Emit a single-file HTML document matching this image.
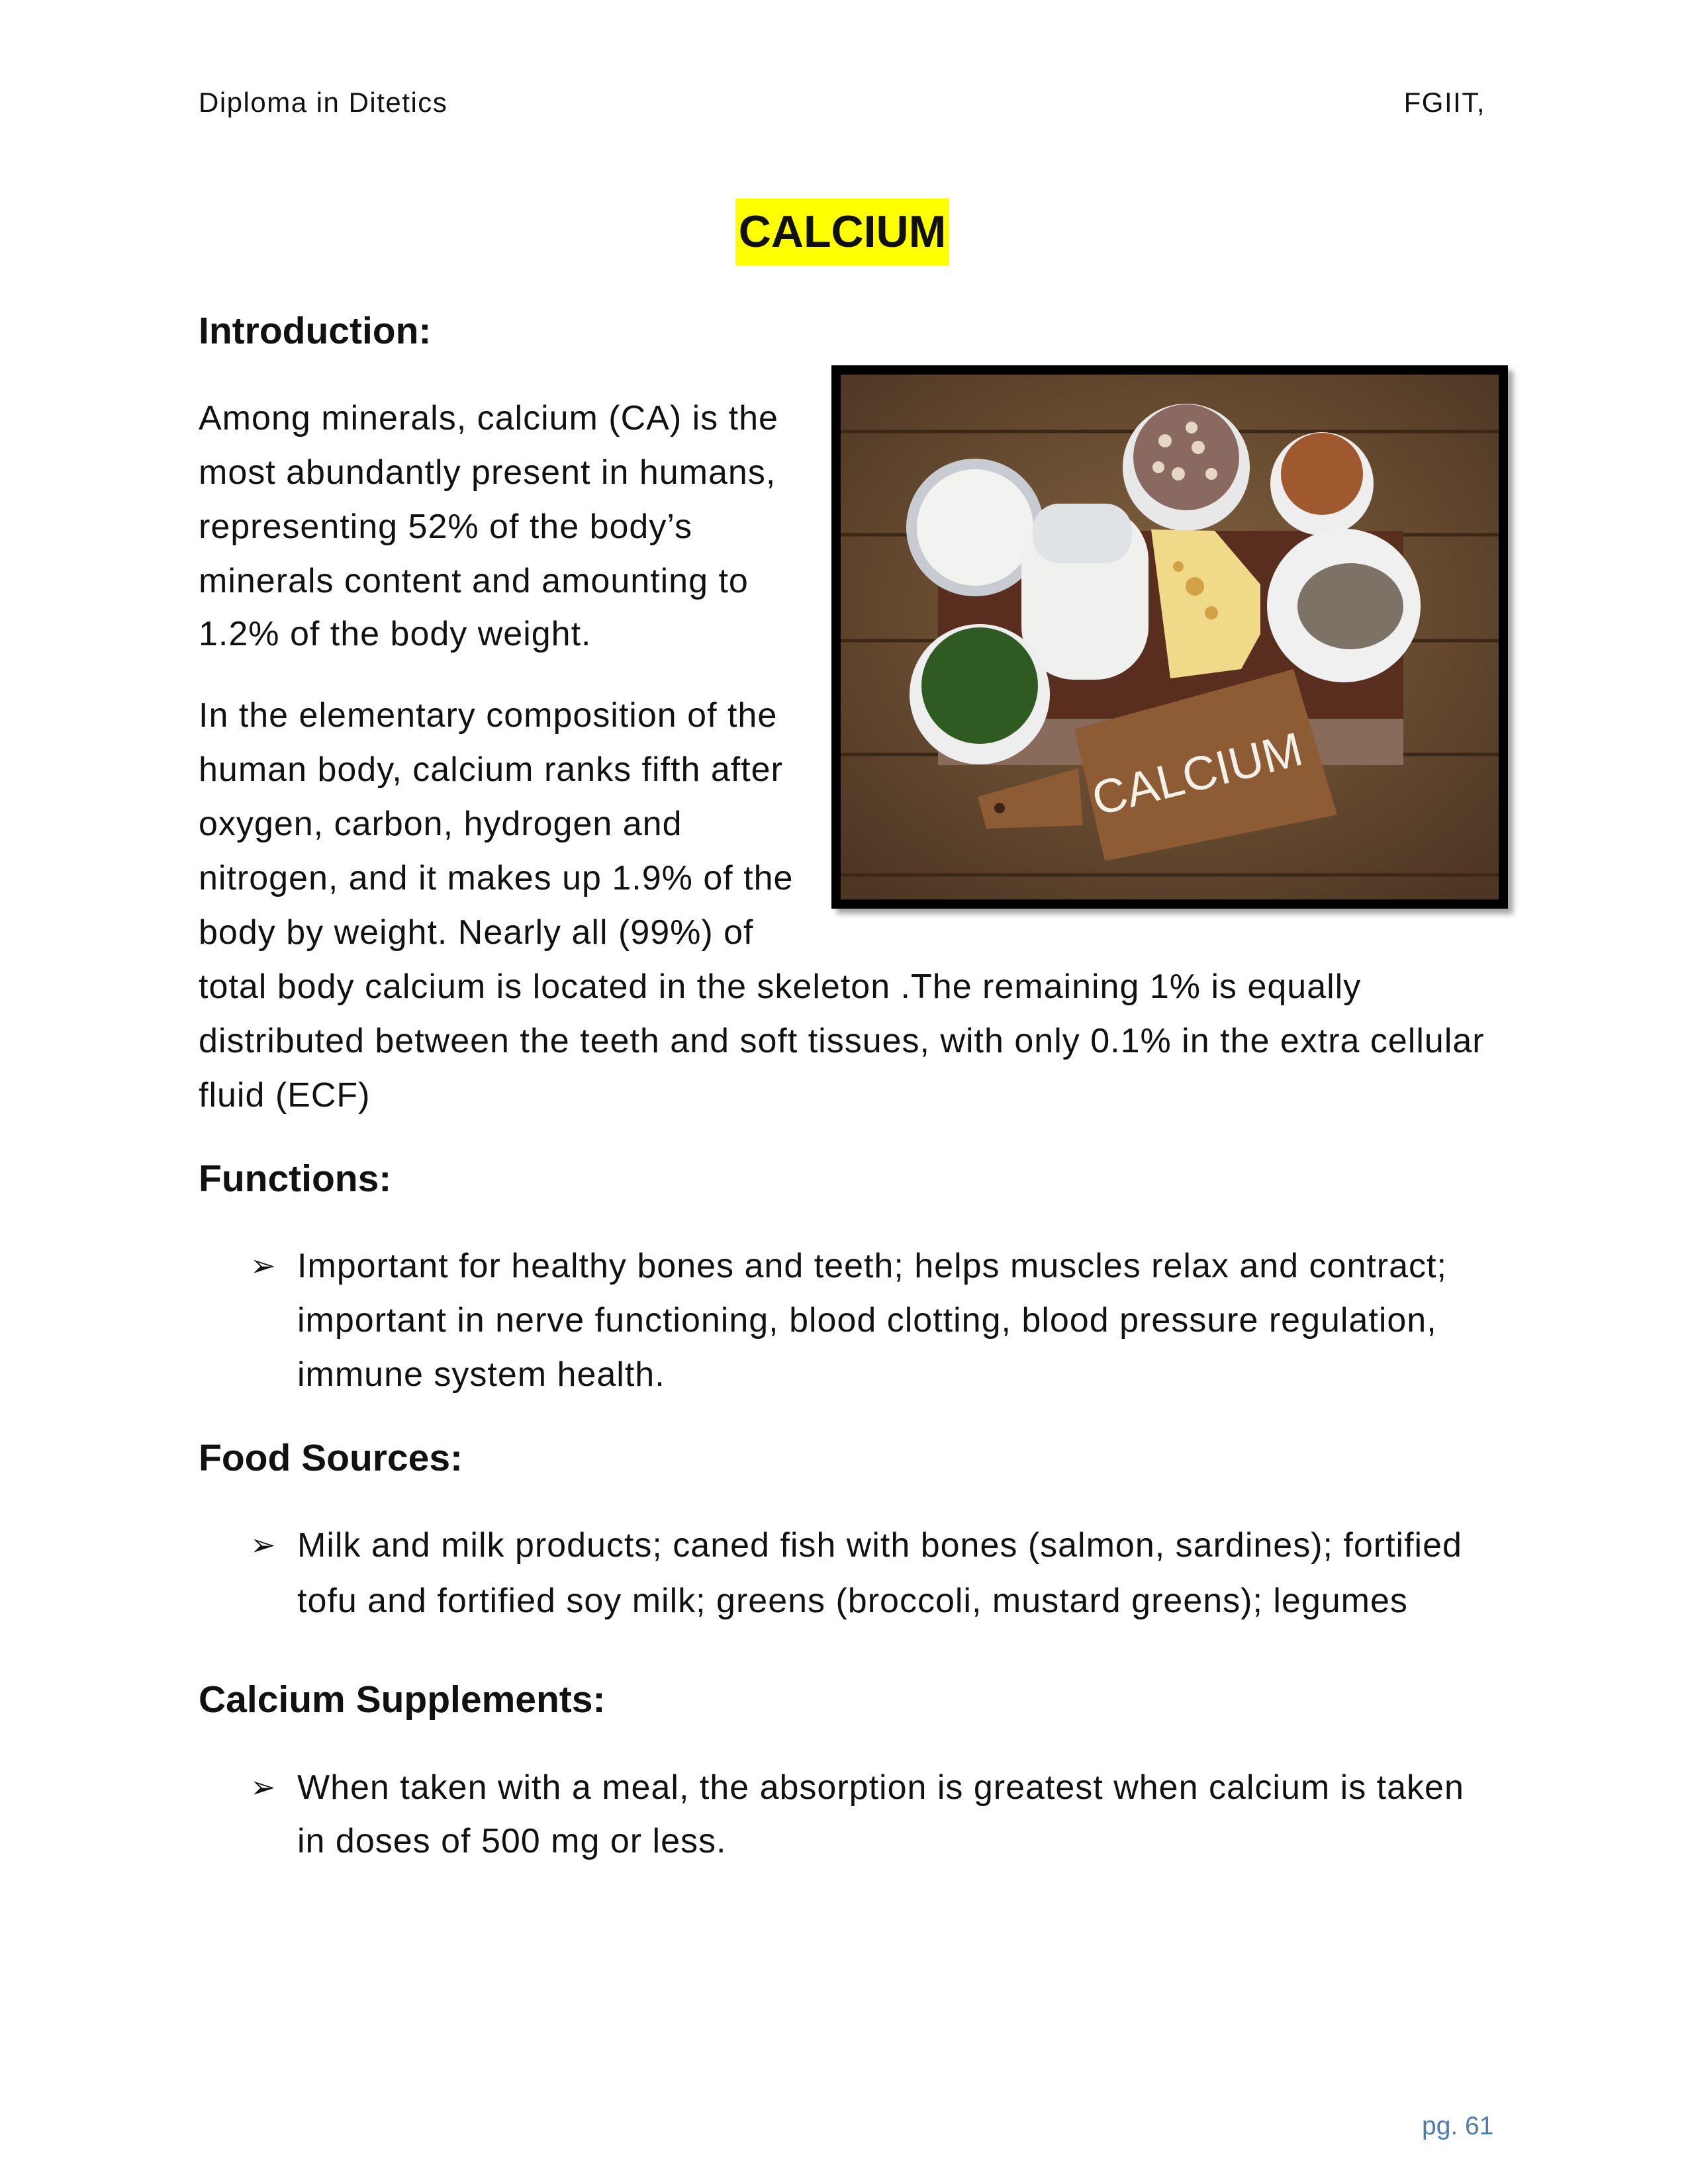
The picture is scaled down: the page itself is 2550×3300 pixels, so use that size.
<!DOCTYPE html>
<html><head><meta charset="utf-8">
<style>
html,body{margin:0;padding:0;background:#fff;}
body{width:2550px;height:3300px;position:relative;overflow:hidden;font-family:"Liberation Sans",sans-serif;color:#111;}
.t{position:absolute;white-space:nowrap;line-height:1;}
.b{font-size:52px;letter-spacing:1px;}
.h{font-size:57px;font-weight:bold;}
.hd{font-size:42px;letter-spacing:1.5px;}
.bul{position:absolute;font-size:46px;line-height:1;}
</style></head><body>
<div class="t hd" style="left:300px;top:134px">Diploma in Ditetics</div>
<div class="t hd" style="right:306px;top:134px">FGIIT,</div>

<div style="position:absolute;left:1111px;top:300px;width:323px;height:101px;background:#ffff00"></div>
<div class="t" style="left:1111px;width:323px;text-align:center;top:316px;font-size:68px;font-weight:bold">CALCIUM</div>

<div class="t h" style="left:300px;top:472px">Introduction:</div>

<div class="t b" style="left:300px;top:606px">Among minerals, calcium (CA) is the</div>
<div class="t b" style="left:300px;top:688px">most abundantly present in humans,</div>
<div class="t b" style="left:300px;top:770px">representing 52% of the body’s</div>
<div class="t b" style="left:300px;top:852px">minerals content and amounting to</div>
<div class="t b" style="left:300px;top:932px">1.2% of the body weight.</div>

<div class="t b" style="left:300px;top:1055px">In the elementary composition of the</div>
<div class="t b" style="left:300px;top:1137px">human body, calcium ranks fifth after</div>
<div class="t b" style="left:300px;top:1219px">oxygen, carbon, hydrogen and</div>
<div class="t b" style="left:300px;top:1301px">nitrogen, and it makes up 1.9% of the</div>
<div class="t b" style="left:300px;top:1383px">body by weight. Nearly all (99%) of</div>
<div class="t b" style="left:300px;top:1465px">total body calcium is located in the skeleton .The remaining 1% is equally</div>
<div class="t b" style="left:300px;top:1547px">distributed between the teeth and soft tissues, with only 0.1% in the extra cellular</div>
<div class="t b" style="left:300px;top:1629px">fluid (ECF)</div>

<div class="t h" style="left:300px;top:1753px">Functions:</div>
<div class="bul" style="left:378px;top:1889px">➢</div>
<div class="t b" style="left:449px;top:1887px">Important for healthy bones and teeth; helps muscles relax and contract;</div>
<div class="t b" style="left:449px;top:1969px">important in nerve functioning, blood clotting, blood pressure regulation,</div>
<div class="t b" style="left:449px;top:2051px">immune system health.</div>

<div class="t h" style="left:300px;top:2175px">Food Sources:</div>
<div class="bul" style="left:378px;top:2311px">➢</div>
<div class="t b" style="left:449px;top:2309px">Milk and milk products; caned fish with bones (salmon, sardines); fortified</div>
<div class="t b" style="left:449px;top:2393px">tofu and fortified soy milk; greens (broccoli, mustard greens); legumes</div>

<div class="t h" style="left:300px;top:2540px">Calcium Supplements:</div>
<div class="bul" style="left:378px;top:2677px">➢</div>
<div class="t b" style="left:449px;top:2675px">When taken with a meal, the absorption is greatest when calcium is taken</div>
<div class="t b" style="left:449px;top:2756px">in doses of 500 mg or less.</div>

<div class="t" style="left:2148px;top:3193px;font-size:39px;color:#4f7cb0">pg. 61</div>

<!-- image -->
<div style="position:absolute;left:1256px;top:552px;width:994px;height:793px;border:14px solid #000;box-shadow:8px 8px 8px rgba(0,0,0,0.35);overflow:hidden;background:#5e4530">
<svg width="994" height="793" viewBox="0 0 994 793" xmlns="http://www.w3.org/2000/svg">
<defs>
<radialGradient id="vg" cx="50%" cy="45%" r="70%"><stop offset="0" stop-color="#83633f"/><stop offset="1" stop-color="#4e3624"/></radialGradient>
</defs>
<rect width="994" height="793" fill="url(#vg)"/>
<g stroke="#3a2716" stroke-width="5">
<line x1="0" y1="86" x2="994" y2="86"/><line x1="0" y1="242" x2="994" y2="242"/>
<line x1="0" y1="402" x2="994" y2="402"/><line x1="0" y1="574" x2="994" y2="574"/>
<line x1="0" y1="756" x2="994" y2="756"/></g>
<rect x="147" y="236" width="703" height="354" fill="#5a2e1e"/>
<rect x="147" y="520" width="703" height="70" fill="#b8a898" opacity="0.5"/>
<circle cx="203" cy="231" r="104" fill="#c8ccd2"/>
<circle cx="203" cy="231" r="88" fill="#f2f2f0"/>
<circle cx="522" cy="140" r="96" fill="#e8e8e8"/>
<circle cx="522" cy="125" r="80" fill="#8a6a60"/>
<g fill="#e6d6c6"><circle cx="490" cy="100" r="10"/><circle cx="540" cy="110" r="10"/><circle cx="510" cy="150" r="10"/><circle cx="560" cy="150" r="9"/><circle cx="480" cy="140" r="9"/><circle cx="530" cy="80" r="9"/></g>
<circle cx="727" cy="165" r="78" fill="#eeeeee"/>
<circle cx="727" cy="150" r="62" fill="#a0582e"/>
<rect x="273" y="200" width="192" height="261" rx="80" fill="#f0f0ee"/>
<rect x="290" y="195" width="150" height="90" rx="40" fill="#dfe3e6"/>
<polygon points="469,234 565,236 634,317 634,392 605,445 498,459" fill="#f1d98a"/>
<g fill="#d4a246"><circle cx="535" cy="320" r="14"/><circle cx="560" cy="360" r="10"/><circle cx="510" cy="290" r="8"/></g>
<circle cx="760" cy="349" r="116" fill="#f0f0f0"/>
<ellipse cx="770" cy="350" rx="80" ry="65" fill="#7d7266"/>
<circle cx="210" cy="483" r="106" fill="#eeeeee"/>
<circle cx="210" cy="470" r="88" fill="#2f5a22"/>
<polygon points="353,536 684,445 750,665 399,735" fill="#8e5c34"/>
<polygon points="207,638 220,686 366,681 359,595" fill="#8e5c34"/>
<circle cx="240" cy="655" r="8" fill="#3a2314"/>
<text x="538" y="628" font-family="Liberation Sans, sans-serif" font-size="72" fill="#f4f0ea" text-anchor="middle" transform="rotate(-14 538 601)">CALCIUM</text>
</svg>
</div>
</body></html>
